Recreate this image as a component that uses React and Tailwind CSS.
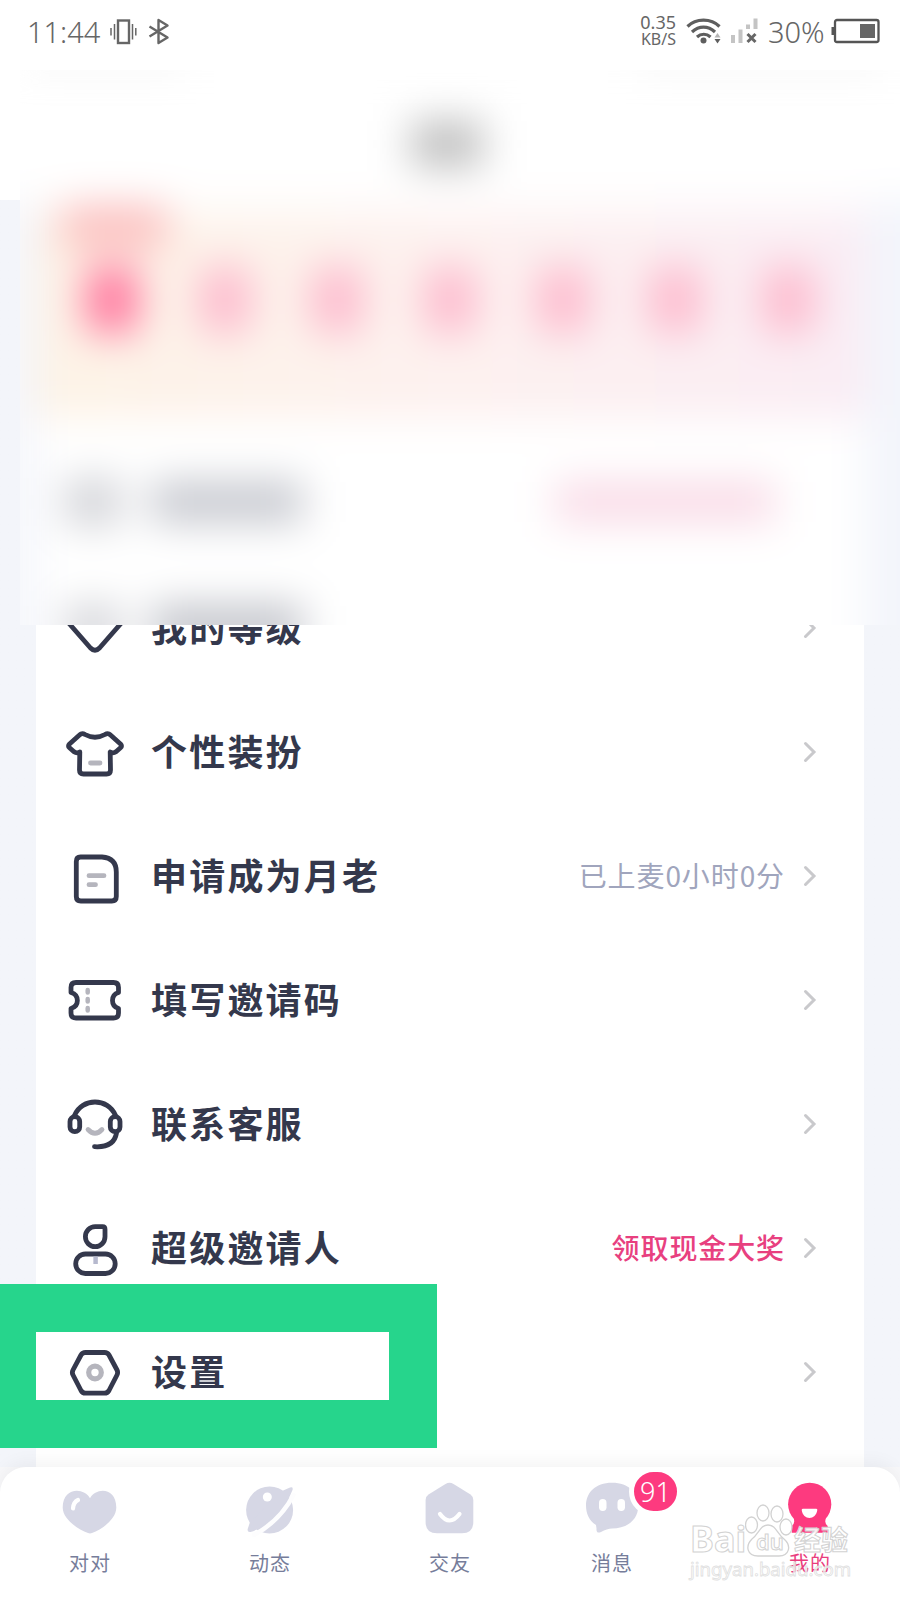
import React, { useState } from 'react'

const INK = '#34384c'
const SOFT = '#b5b5bd'
const MUTED = '#d6d7e5'
const PINK = '#fd3a7f'

function RowIcon({ children }) {
  return (
    <svg
      width="60"
      height="60"
      viewBox="0 0 60 60"
      fill="none"
      stroke={INK}
      strokeWidth="4.8"
      strokeLinecap="round"
      strokeLinejoin="round"
      className="flex-shrink-0"
    >
      {children}
    </svg>
  )
}

const icons = {
  level: (
    <RowIcon>
      <path d="M14 10H46L55.5 26L34.5 50Q30 54.5 25.5 50L4.5 26Z" />
    </RowIcon>
  ),
  shirt: (
    <RowIcon>
      <path d="M14.5 13Q17 10.5 20 12.500Q30 18 40 12.500Q43 10.500 45.500 13L55.500 22Q57.500 24 55.500 25.800L51 29.800Q48 31.800 45.200 30L45.500 48Q45.500 52 41.500 52H18.500Q14.500 52 14.500 48L14.800 30Q12 31.800 9 29.800L4.500 25.800Q2.500 24 4.500 22Z" />
      <path d="M25.500 41H35" stroke={SOFT} />
    </RowIcon>
  ),
  doc: (
    <RowIcon>
      <path d="M15.500 11H37Q51.300 12 51.300 26V50.500Q51.300 55 46.800 55H15.800Q11.300 55 11.300 50.500V15.500Q11.300 11 15.500 11Z" />
      <path d="M24 29.700H39M24 38.700H30.500" stroke={SOFT} />
    </RowIcon>
  ),
  ticket: (
    <RowIcon>
      <path d="M11 12.500H48.500Q53.500 12.500 53.500 17.500V22.500C45.500 25 45.500 36 53.500 38.500V43Q53.500 48 48.500 48H11Q6 48 6 43V38.500C14.500 36 14.500 25 6 22.500V17.500Q6 12.500 11 12.500Z" />
      <path d="M22.700 20V22.500M22.700 29V31.500M22.700 38V40.500" stroke={SOFT} strokeWidth="4.500" />
    </RowIcon>
  ),
  headset: (
    <RowIcon>
      <path d="M9.500 21.500C17 3.500 43 3.500 50.500 21.500M51.500 39C50 48 43 53.500 29.500 52.700" />
      <rect x="5" y="22.700" width="9.700" height="15" rx="4.800" />
      <rect x="45.300" y="22.700" width="9.700" height="15" rx="4.800" />
      <path d="M23 35.500Q30 43 37 35.500" stroke={SOFT} />
    </RowIcon>
  ),
  person: (
    <RowIcon>
      <path d="M30.300 8.700H37.500Q40 8.700 40 11.200V18.700A9.800 10 0 1 1 30.300 8.700Z" />
      <rect x="10.700" y="36" width="39.500" height="19.500" rx="9.700" />
      <path d="M30.600 38.500V46" stroke="#b6b9ce" strokeLinecap="butt" strokeWidth="4.500" />
    </RowIcon>
  ),
  settings: (
    <RowIcon>
      <path d="M20.500 10.500H39.500Q42.500 10.500 44 13L52 28Q53.300 30.500 52 33L44 48.500Q42.500 51.200 39.500 51.200H20.500Q17.500 51.200 16 48.500L8 33Q6.700 30.500 8 28L16 13Q17.500 10.500 20.500 10.500Z" />
      <circle cx="30" cy="30.500" r="6.300" stroke={SOFT} strokeWidth="5.200" />
    </RowIcon>
  ),
}

const rows = [
  { id: 'shirt', label: '个性装扮' },
  { id: 'doc', label: '申请成为月老', note: '已上麦0小时0分', noteClass: 'text-[#a0a5bd]' },
  { id: 'ticket', label: '填写邀请码' },
  { id: 'headset', label: '联系客服' },
  { id: 'person', label: '超级邀请人', note: '领取现金大奖', noteClass: 'text-[#e8407f] font-medium' },
  { id: 'settings', label: '设置' },
]

function MenuRow({ row }) {
  return (
    <div className="h-[124px] flex-shrink-0 flex items-center pl-[29px] pr-[47px]">
      {icons[row.id]}
      <span className="ml-[26px] pb-[5px] flex-1 text-[36px] leading-none tracking-[2.2px] font-bold text-[#34384c]">
        {row.label}
      </span>
      {row.note && (
        <span className={`mr-[17px] pb-[2px] text-[28px] leading-none tracking-[0.9px] ${row.noteClass}`}>{row.note}</span>
      )}
      <svg width="15" height="22" viewBox="0 0 15 22" fill="none" stroke="#c9c9cc" strokeWidth="3" strokeLinecap="round">
        <path d="M3.500 2.500L12 11L3.500 19.500" />
      </svg>
    </div>
  )
}

function StatusBar() {
  return (
    <div className="h-[70px] flex-shrink-0 flex justify-between pl-[27px] pr-5 pt-[10px] pb-[16px] text-[#666] font-['Noto_Sans',sans-serif]">
      <div className="flex items-center">
        <span className="w-[73px] pb-[2px] text-[29px] font-light leading-none">11:44</span>
        <svg width="28" height="28" viewBox="0 0 28 28" fill="none" stroke="#666" className="ml-[9px] -mt-px">
          <rect x="9" y="2.500" width="11" height="22.500" strokeWidth="2.400" />
          <path d="M5.500 6V21.500M23.500 6V21.500M2 10V17.500M26.800 10V17.500" strokeWidth="1.500" />
        </svg>
        <svg width="22" height="28" viewBox="0 0 22 28" fill="none" stroke="#666" strokeWidth="2.400" strokeLinejoin="round" className="ml-[11px] -mt-px">
          <path d="M1.500 8.500L19.500 19.500L10.500 25V2L19.500 7.500L1.500 18.500" />
        </svg>
      </div>
      <div className="flex items-center -mt-[2px]">
        <div className="mr-[10px] flex flex-col items-end">
          <span className="text-[18px] leading-[17px]">0.35</span>
          <span className="text-[16px] leading-[17px]">KB/S</span>
        </div>
        <svg width="36" height="28" viewBox="0 0 36 28" fill="none" stroke="#5e5e5e" strokeWidth="3.200">
          <path d="M1.500 9.500C10 1 25 1 33.500 9.500M6 15C13 8.500 22 8.500 29 15M11 20C15 16.300 20.500 16.300 24.500 20" />
          <circle cx="17.500" cy="23.500" r="3" fill="#5e5e5e" stroke="none" />
          <path d="M28.500 20.500L31.500 16L34.500 20.500Z" fill="#b5b5b5" stroke="none" />
          <path d="M28.500 22L31.500 26.500L34.500 22Z" fill="#5e5e5e" stroke="none" />
        </svg>
        <svg width="28" height="28" viewBox="0 0 28 28" fill="none" stroke="#c4c4c4" strokeWidth="4" className="ml-[8px]">
          <path d="M3 18V26M10.500 12.500V26M18 7.500V12M25.500 1.500V12" />
          <path d="M17.500 17L25.500 25M25.500 17L17.500 25" stroke="#666" strokeWidth="3" />
        </svg>
        <span className="ml-[10px] w-[63px] text-[29px] font-light leading-none">30%</span>
        <svg width="49" height="28" viewBox="0 0 49 28">
          <rect x="4" y="3" width="43.500" height="22" rx="2" fill="none" stroke="#555" strokeWidth="2.300" />
          <rect x="0.500" y="10" width="3.500" height="8" fill="#555" />
          <rect x="29" y="7" width="15" height="14" fill="#666" />
        </svg>
      </div>
    </div>
  )
}

// Private part of the profile, kept out of focus
function FrostedHeader() {
  return (
    <div className="ml-5 h-[555px] flex-shrink-0 overflow-hidden bg-white">
      <div className="-ml-5 w-[960px] h-[680px] flex flex-col blur-[20px]">
        <div className="h-[146px] -mt-4 flex-shrink-0 flex flex-col bg-white">
          <div className="h-[18px] flex-shrink-0 flex justify-between pl-8 pr-[80px]">
            <div className="w-[150px] bg-[#f5f5f5]" />
            <div className="w-[240px] bg-[#f5f5f5]" />
          </div>
          <div className="mt-[49px] ml-[411px] w-[72px] h-[46px] flex-shrink-0 bg-[#bebebe]" />
        </div>
        <div className="flex-1 bg-[#f3f5fb] pl-[36px]">
          <div className="w-[828px] h-full bg-white">
            <div className="h-[218px] flex flex-col bg-linear-to-r from-[#fdf3e6] via-[#fdf1ef] to-[#faecf4]">
              <div className="h-[20px] bg-white/60 flex-shrink-0" />
              <div className="ml-[26px] -mt-[14px] w-[104px] h-[40px] flex-shrink-0 bg-[#fbbcbc]" />
              <div className="mt-[21px] flex justify-between pl-[50px] pr-[50px]">
                {[0, 1, 2, 3, 4, 5, 6].map((day) => (
                  <div
                    key={day}
                    className={`w-[52px] h-[66px] rounded-xl ${day === 0 ? 'bg-[#ff759d]' : 'bg-[#fdbbce]'}`}
                  />
                ))}
              </div>
            </div>
            <div className="h-[124px] mt-[22px] flex items-center pl-[29px]">
              <div className="w-[56px] h-[48px] bg-[#d2d3d8]" />
              <div className="ml-[30px] w-[152px] h-[42px] bg-[#c6c8cf]" />
              <div className="ml-[252px] w-[220px] h-[42px] bg-[#f9dbe7]" />
            </div>
            <div className="h-[124px] flex items-center pl-[29px]">
              <div className="w-[56px] h-[42px] bg-[#d2d3d8]" />
              <div className="ml-[30px] w-[152px] h-[42px] bg-[#c0c2c9]" />
            </div>
          </div>
        </div>
      </div>
    </div>
  )
}

function TabIcon({ children }) {
  return (
    <svg width="60" height="60" viewBox="0 0 60 60" fill={MUTED} strokeLinecap="round" strokeLinejoin="round">
      {children}
    </svg>
  )
}

const tabs = [
  {
    id: 'match',
    label: '对对',
    icon: (
      <TabIcon>
        <path d="M30 16.300C36 5 56.300 5 56.300 25.500C56.300 37 42 47.500 32 51Q30 51.800 28 51C18 47.500 2.700 37 2.700 25.500C2.700 5 24 5 30 16.300Z" />
        <path d="M18 18Q13.500 20 13 26.500" fill="none" stroke="#fff" strokeWidth="4.200" />
      </TabIcon>
    ),
  },
  {
    id: 'feed',
    label: '动态',
    icon: (
      <TabIcon>
        <circle cx="29.600" cy="28" r="23.500" />
        <path d="M42 9L50 5.500Q53.500 4.500 52.500 8Q48 20 37 32Q22 47 10.500 50Q7 50.500 7.700 47L10 40Z" />
        <path d="M14 53Q40 39 53.500 13" fill="none" stroke="#fdfdfe" strokeWidth="4.500" />
        <circle cx="27.300" cy="15" r="4.500" fill="#fff" />
      </TabIcon>
    ),
  },
  {
    id: 'friends',
    label: '交友',
    icon: (
      <TabIcon>
        <path d="M25.500 2Q29.500 -0.300 33.500 2L50.500 12.500Q53.300 14.500 53.300 18V40Q53.300 51.300 42 51.300H17Q5.600 51.300 5.600 40V18Q5.600 14.500 8.500 12.500Z" />
        <path d="M20 32Q29.500 45 39.500 32" fill="none" stroke="#fff" strokeWidth="4.200" />
      </TabIcon>
    ),
  },
  {
    id: 'chat',
    label: '消息',
    badge: 91,
    icon: (
      <TabIcon>
        <path d="M30 0.700C47 0.700 56.300 11 56.300 23.500C56.300 38 45 46.500 30 46.500Q25 46.500 19 50Q14 52 14.500 46.500L14 43C7 39 4 31 4 23.500C4 11 13 0.700 30 0.700Z" />
        <rect x="17" y="17" width="7.500" height="12" rx="3.700" fill="#fff" />
        <rect x="35.500" y="17" width="7.500" height="12" rx="3.700" fill="#fff" />
      </TabIcon>
    ),
  },
  {
    id: 'me',
    label: '我的',
    icon: (
      <TabIcon>
        <circle cx="29.700" cy="22.300" r="21.600" fill={PINK} />
        <path d="M14 34H45.500V38Q44.500 41 47.700 44V50.700H11.700V44Q15 41 14 38Z" fill={PINK} />
        <path d="M23 26.700H36Q37.500 26.700 37.300 28C36 38.500 23 38.500 21.700 28Q21.700 26.700 23 26.700Z" fill="#fff" />
      </TabIcon>
    ),
  },
]

function TabBar({ active, onSelect }) {
  return (
    <div className="h-[133px] flex-shrink-0 bg-[#f8f8fa]">
      <div className="relative h-full grid grid-cols-5 rounded-t-[26px] bg-white shadow-[0_-4px_18px_rgba(0,0,0,0.05)]">
        {tabs.map((tab) => (
          <button
            key={tab.id}
            onClick={() => onSelect(tab.id)}
            className={`flex flex-col items-center pt-[15px] ${tab.id === 'chat' ? 'pr-9' : ''}`}
          >
            <span className="relative">
              {tab.icon}
              {tab.badge && (
                <span className="absolute left-[47px] -top-[15px] w-[53px] h-[49px] rounded-full border-[5px] border-white bg-[#fd3a7f] flex items-center justify-center text-[27px] leading-none text-white font-light font-['Noto_Sans',sans-serif]">
                  {tab.badge}
                </span>
              )}
            </span>
            <span
              className={`mt-[11px] text-[20px] leading-[20px] tracking-[1px] ${
                active === tab.id ? 'text-[#ea3d7d]' : 'text-[#767d9a]'
              }`}
            >
              {tab.label}
            </span>
          </button>
        ))}
      </div>
    </div>
  )
}

function Watermark() {
  return (
    <div className="absolute left-[690px] top-[1500px] w-[166px] pointer-events-none font-['Noto_Sans','Noto_Sans_CJK_SC',sans-serif] text-white/90">
      <div className="flex items-end h-[58px] whitespace-nowrap [-webkit-text-stroke:1px_#d2d2d2]">
        <span className="w-[55px] text-[36px] leading-[38px] font-bold">Bai</span>
        <span className="relative w-[48px] h-[56px]">
          <svg width="48" height="56" viewBox="0 0 48 56" fill="#fff" fillOpacity="0.6" stroke="#d2d2d2" strokeWidth="1.300">
            <ellipse cx="6.500" cy="23" rx="6" ry="8" />
            <ellipse cx="18" cy="11" rx="6" ry="8" />
            <ellipse cx="32" cy="12" rx="6" ry="8" />
            <ellipse cx="41" cy="25" rx="6" ry="8" />
            <path d="M23 23C31 23 32 32 39 37C47 44 44 54 34 54C27 54 19 54 13 54C2 54 0 44 7 37C14 32 15 23 23 23Z" fillOpacity="0.85" />
          </svg>
          <span className="absolute left-[11px] top-[26px] text-[22px] leading-[26px] font-semibold">du</span>
        </span>
        <span className="ml-[1px] text-[27px] leading-[36px] font-bold">经验</span>
      </div>
      <div className="text-[18.6px] leading-[22px] whitespace-nowrap text-white/70 [-webkit-text-stroke:0.8px_#e0e0e0]">jingyan.baidu.com</div>
    </div>
  )
}

export default function App() {
  const [activeTab, setActiveTab] = useState('me')

  return (
    <div className="relative w-[900px] h-[1600px] overflow-hidden flex flex-col bg-linear-to-b from-white from-[200px] to-[#f3f5fa] to-[200px] font-['Noto_Sans_CJK_SC',sans-serif]">
      <StatusBar />
      <FrostedHeader />

      <div className="mx-9 flex-1 flex flex-col bg-white">
        <div className="h-[65px] flex-shrink-0 flex flex-col justify-end overflow-hidden">
          <MenuRow row={{ id: 'level', label: '我的等级' }} />
        </div>
        {rows.map((row) => (
          <MenuRow key={row.id} row={row} />
        ))}
      </div>

      <TabBar active={activeTab} onSelect={setActiveTab} />

      <div className="absolute left-0 top-[1284px] w-[437px] h-[164px] border-[#26d58c] border-l-[36px] border-y-[48px] border-r-[48px] pointer-events-none" />
      <Watermark />
    </div>
  )
}
